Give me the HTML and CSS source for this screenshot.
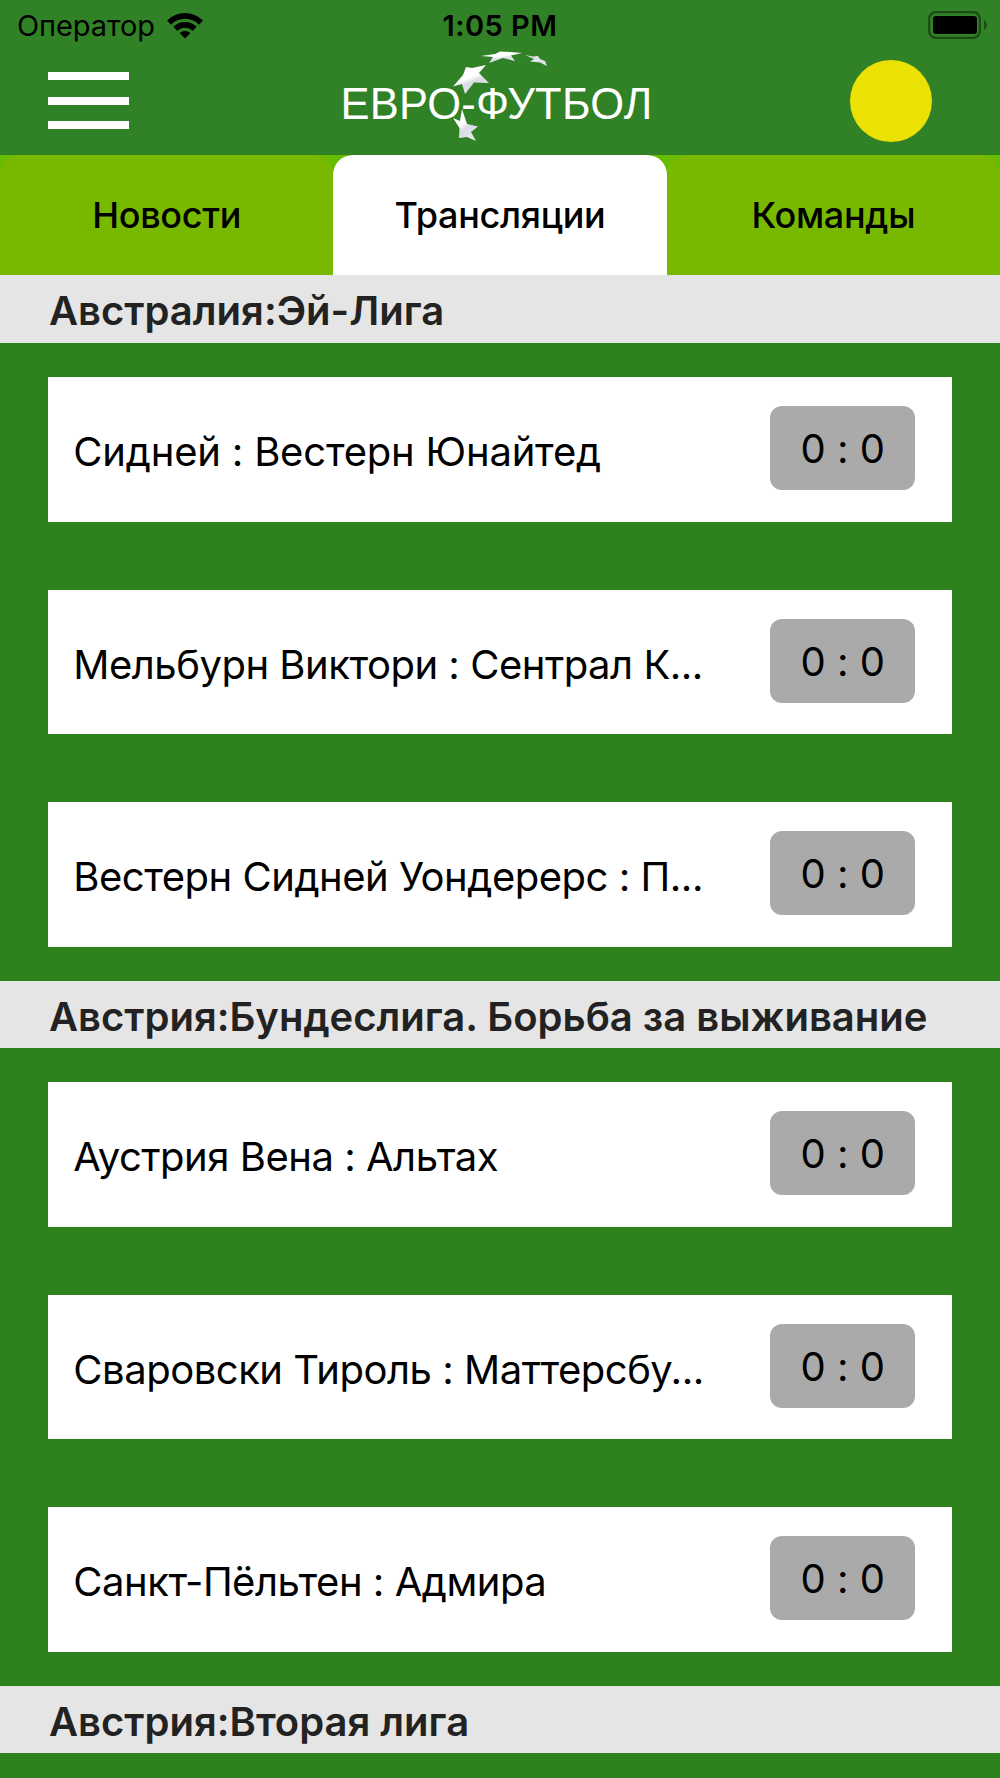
FILE: index.html
```html
<!DOCTYPE html>
<html lang="ru">
<head>
    <meta charset="UTF-8">
    <meta name="viewport" content="width=device-width, initial-scale=1.0">
    <title>Евро-Футбол - Трансляции</title>
    <link rel="stylesheet" href="styles.css">
</head>
<body>

    <header>
        <div class="status-bar">
            <div class="carrier">
                <span>Оператор</span>
                <svg class="wifi" viewBox="0 0 38 28" width="38" height="28">
                    <path d="M1 9.5 A25.5 25.5 0 0 1 37 9.5 L33 13.7 A19.6 19.6 0 0 0 5 13.7 Z"/>
                    <path d="M7.3 15.8 A16.7 16.7 0 0 1 30.7 15.8 L26.6 20 A10.8 10.8 0 0 0 11.4 20 Z"/>
                    <path d="M13.6 22.1 A8 8 0 0 1 24.4 22.1 L19 27.5 Z"/>
                </svg>
            </div>
            <span class="time">1:05 PM</span>
            <svg class="battery" viewBox="0 0 60 28" width="60" height="28">
                <rect x="2.2" y="1.2" width="50.6" height="25.6" rx="6.5" fill="none" stroke="#1c4d17" stroke-width="2.2"/>
                <rect x="6" y="5" width="44" height="18" rx="3"/>
                <path d="M57 9 Q60 11 60 14 Q60 17 57 19 Z" fill="#1c4d17"/>
            </svg>
        </div>
        <div class="top-bar">
            <div class="menu-btn"><span></span><span></span><span></span></div>
            <div class="logo">
                <svg class="stars" viewBox="0 0 100 94" width="100" height="94">
                    <defs>
                        <linearGradient id="shade" x1="0.2" y1="0" x2="0.7" y2="1">
                            <stop offset="0.45" stop-color="#fff"/>
                            <stop offset="0.6" stop-color="#d9dce5"/>
                            <stop offset="1" stop-color="#e6e8ee"/>
                        </linearGradient>
                    </defs>
                    <path fill="url(#shade)" d="M31 6 L45 4 L50 1.5 L60 2 L72 3 L61 5.5 L65 11 L53 8 L39 13 L43 7 Z"/>
                    <path fill="#dfe2ea" d="M75 5 L83 6.5 L88 6 L90 9 L95 11 L97 16 L90 12.5 L80 11.5 L84 9 Z"/>
                    <path fill="url(#shade)" d="M3 36.5 L13 25 L16 17 L22 18 L36 15 L29 23 L39 33 L24 32.5 L15 44 L12 34 Z"/>
                    <path fill="url(#shade)" d="M12 59 L17 74 L28 76.5 L21 82 L26 91 L17 87 L9 88 L9.5 78 L3 68 L10 71 Z"/>
                </svg>
                <span>ЕВРО-ФУТБОЛ</span>
            </div>
            <div class="ball"></div>
        </div>
    </header>

    <nav class="tabs">
        <div class="tab">Новости</div>
        <div class="tab active">Трансляции</div>
        <div class="tab">Команды</div>
    </nav>

    <section>
        <h2>Австралия:Эй-Лига</h2>
        <div class="match"><p class="loose">Сидней : Вестерн Юнайтед</p><span class="score">0 : 0</span></div>
        <div class="match"><p>Мельбурн Виктори : Сентрал К...</p><span class="score">0 : 0</span></div>
        <div class="match"><p>Вестерн Сидней Уондерерс : П...</p><span class="score">0 : 0</span></div>
    </section>

    <section>
        <h2>Австрия:Бундеслига. Борьба за выживание</h2>
        <div class="match"><p>Аустрия Вена : Альтах</p><span class="score">0 : 0</span></div>
        <div class="match"><p>Сваровски Тироль : Маттерсбу...</p><span class="score">0 : 0</span></div>
        <div class="match"><p>Санкт-Пёльтен : Адмира</p><span class="score">0 : 0</span></div>
    </section>

    <section class="last">
        <h2>Австрия:Вторая лига</h2>
    </section>

</body>
</html>
```
FILE: styles.css
```css
* { box-sizing: border-box; }
body {
    margin: 0;
    background: #2d821e; color: #000;
    font-family: Inter, "Noto Sans", sans-serif;
    font-feature-settings: "calt" 0;
}
header { height: 155px; background: #318126; }

.status-bar {
    display: grid; grid-template-columns: 1fr auto 1fr; align-items: center;
    height: 50px; padding: 0 13px;
    font-size: 29px; line-height: 51px;
}
.carrier { display: flex; align-items: center; gap: 11px; padding-left: 4px; letter-spacing: -0.1px; }
.wifi { margin-top: -2px; }
.time { font-weight: 570; letter-spacing: 0.5px; }
.battery { justify-self: end; margin-top: -2px; }

.top-bar { display: flex; justify-content: space-between; align-items: center; height: 101.5px; padding: 0 68px 0 48px; }
.menu-btn { display: flex; flex-direction: column; gap: 16.3px; width: 81px; }
.menu-btn span { height: 8px; background: #fff; }
.logo { position: relative; top: 4px; left: 7px; color: #fff; font: 43.5px "Liberation Sans", Arial, sans-serif; letter-spacing: 0.2px; }
.stars { position: absolute; left: 109px; top: -30px; }
.ball { width: 82px; height: 82px; border-radius: 50%; background: #ebe105; }

.tabs { display: flex; height: 120.4px; background: #68bc00; }
.tab {
    flex: 1; border-radius: 20px 20px 0 0; background: #78b900;
    font-size: 36px; font-weight: 460; line-height: 120px; text-align: center; letter-spacing: -0.3px;
}
.tab.active { background: #fff; }

h2 {
    height: 67.7px; margin: 0; padding-left: 49px;
    background: #e5e5e5; color: #222;
    font-size: 40px; font-weight: 600; line-height: 71px; white-space: nowrap;
}
section { height: 705.2px; }
.last { height: auto; }
.match {
    display: flex; justify-content: space-between;
    height: 144.5px; margin: 34px 48.3px 68px; padding: 29px 36.5px 0 25px;
    background: #fff; font-size: 40px;
}
.match p { margin: 0; line-height: 91px; letter-spacing: -0.48px; white-space: nowrap; }
.match .loose { letter-spacing: -0.2px; }
.score {
    width: 145px; height: 84px; border-radius: 12px;
    background: #aaa; line-height: 86px; text-align: center;
}
```
